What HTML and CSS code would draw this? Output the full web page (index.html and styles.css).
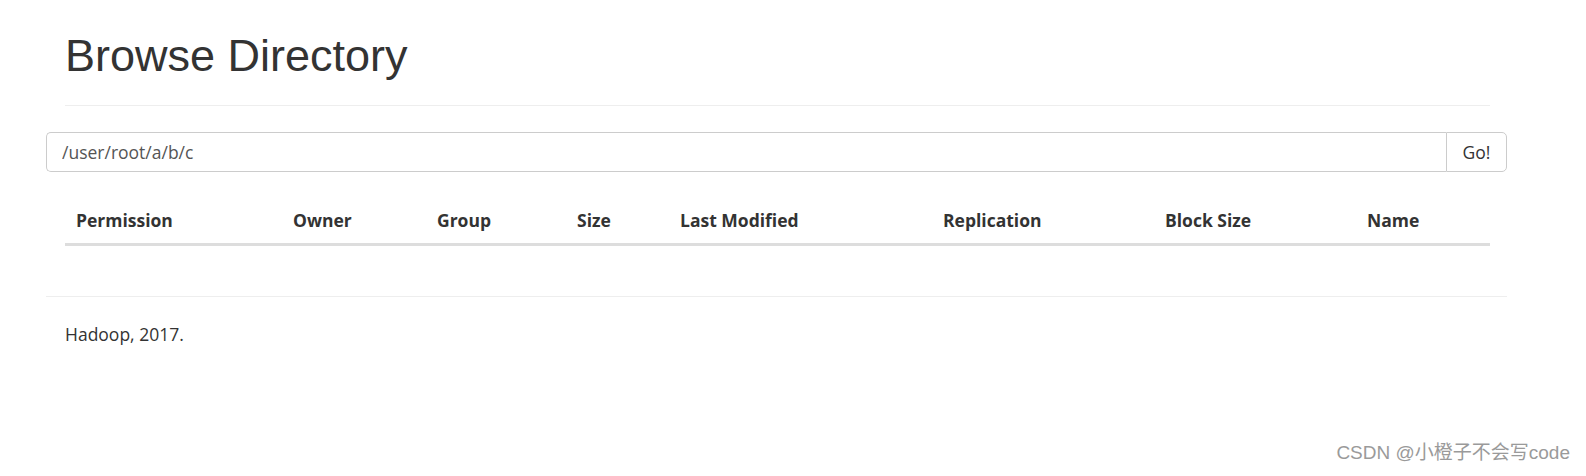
FILE: index.html
```html
<!DOCTYPE html>
<html>
<head>
<meta charset="utf-8">
<title>Browsing HDFS</title>
<link rel="stylesheet" href="styles.css">
</head>
<body>
<div class="container">
  <div class="page-header">
    <h1>Browse Directory</h1>
  </div>
  <form class="input-group">
    <input class="form-control" type="text" value="/user/root/a/b/c">
    <button class="btn" type="button">Go!</button>
  </form>
  <table class="table">
    <thead>
      <tr>
        <th class="c-perm">Permission</th>
        <th class="c-owner">Owner</th>
        <th class="c-group">Group</th>
        <th class="c-size">Size</th>
        <th class="c-mod">Last Modified</th>
        <th class="c-rep">Replication</th>
        <th class="c-block">Block Size</th>
        <th class="c-name">Name</th>
      </tr>
    </thead>
    <tbody></tbody>
  </table>
  <hr class="rule">
  <div class="footer">
    <p>Hadoop, 2017.</p>
  </div>
</div>
<div class="watermark">CSDN @小橙子不会写code</div>
</body>
</html>
```

FILE: styles.css
```css
html, body {
  margin: 0;
  padding: 0;
  background: #fff;
}
body {
  font-family: "Open Sans", "Noto Sans", sans-serif;
  font-size: 17.5px;
  line-height: 25px;
  color: #333;
}
.container {
  width: 1461px;
  margin-left: 46px;
}
.page-header {
  margin: 31px 17px 0 19px;
  padding-bottom: 24px;
  border-bottom: 1px solid #eee;
}
.page-header h1 {
  margin: 0;
  font-family: "Liberation Sans", Arial, sans-serif;
  font-weight: 400;
  font-size: 45px;
  line-height: 50px;
  color: #333;
}
.input-group {
  display: flex;
  margin: 26px 0 0 0;
  height: 40px;
}
.form-control {
  flex: 1;
  box-sizing: border-box;
  height: 40px;
  margin: 0;
  padding: 0 15px;
  border: 1px solid #ccc;
  border-right: none;
  border-radius: 5px 0 0 5px;
  font-family: "Open Sans", "Noto Sans", sans-serif;
  font-size: 17.5px;
  color: #555;
  background: #fff;
  outline: none;
}
.btn {
  box-sizing: border-box;
  width: 61px;
  height: 40px;
  margin: 0;
  padding: 0;
  border: 1px solid #ccc;
  border-radius: 0 5px 5px 0;
  background: #fff;
  font-family: "Open Sans", "Noto Sans", sans-serif;
  font-size: 17.5px;
  color: #333;
}
.table {
  width: 1425px;
  margin: 26px 0 0 19px;
  border-collapse: collapse;
  table-layout: fixed;
}
.table th {
  box-sizing: border-box;
  text-align: left;
  font-weight: 700;
  padding: 10px 10px 10px 11px;
  border-bottom: 3px solid #ddd;
  white-space: nowrap;
}
.c-perm { width: 217px; }
.c-owner { width: 144px; }
.c-group { width: 140px; }
.c-size { width: 103px; }
.c-mod { width: 263px; }
.c-rep { width: 222px; }
.c-block { width: 202px; }
.c-name { width: 134px; }
.rule {
  margin: 50px 0 0 0;
  border: 0;
  border-top: 1px solid #eee;
}
.footer {
  padding: 0 19px;
}
.footer p {
  margin: 25px 0 0 0;
}
.watermark {
  position: absolute;
  right: 16px;
  top: 441px;
  font-family: "Liberation Sans", "Noto Sans CJK SC", sans-serif;
  font-size: 19px;
  line-height: 24px;
  color: #9a9a9a;
  text-shadow: 0 0 1px #fff;
}
```
